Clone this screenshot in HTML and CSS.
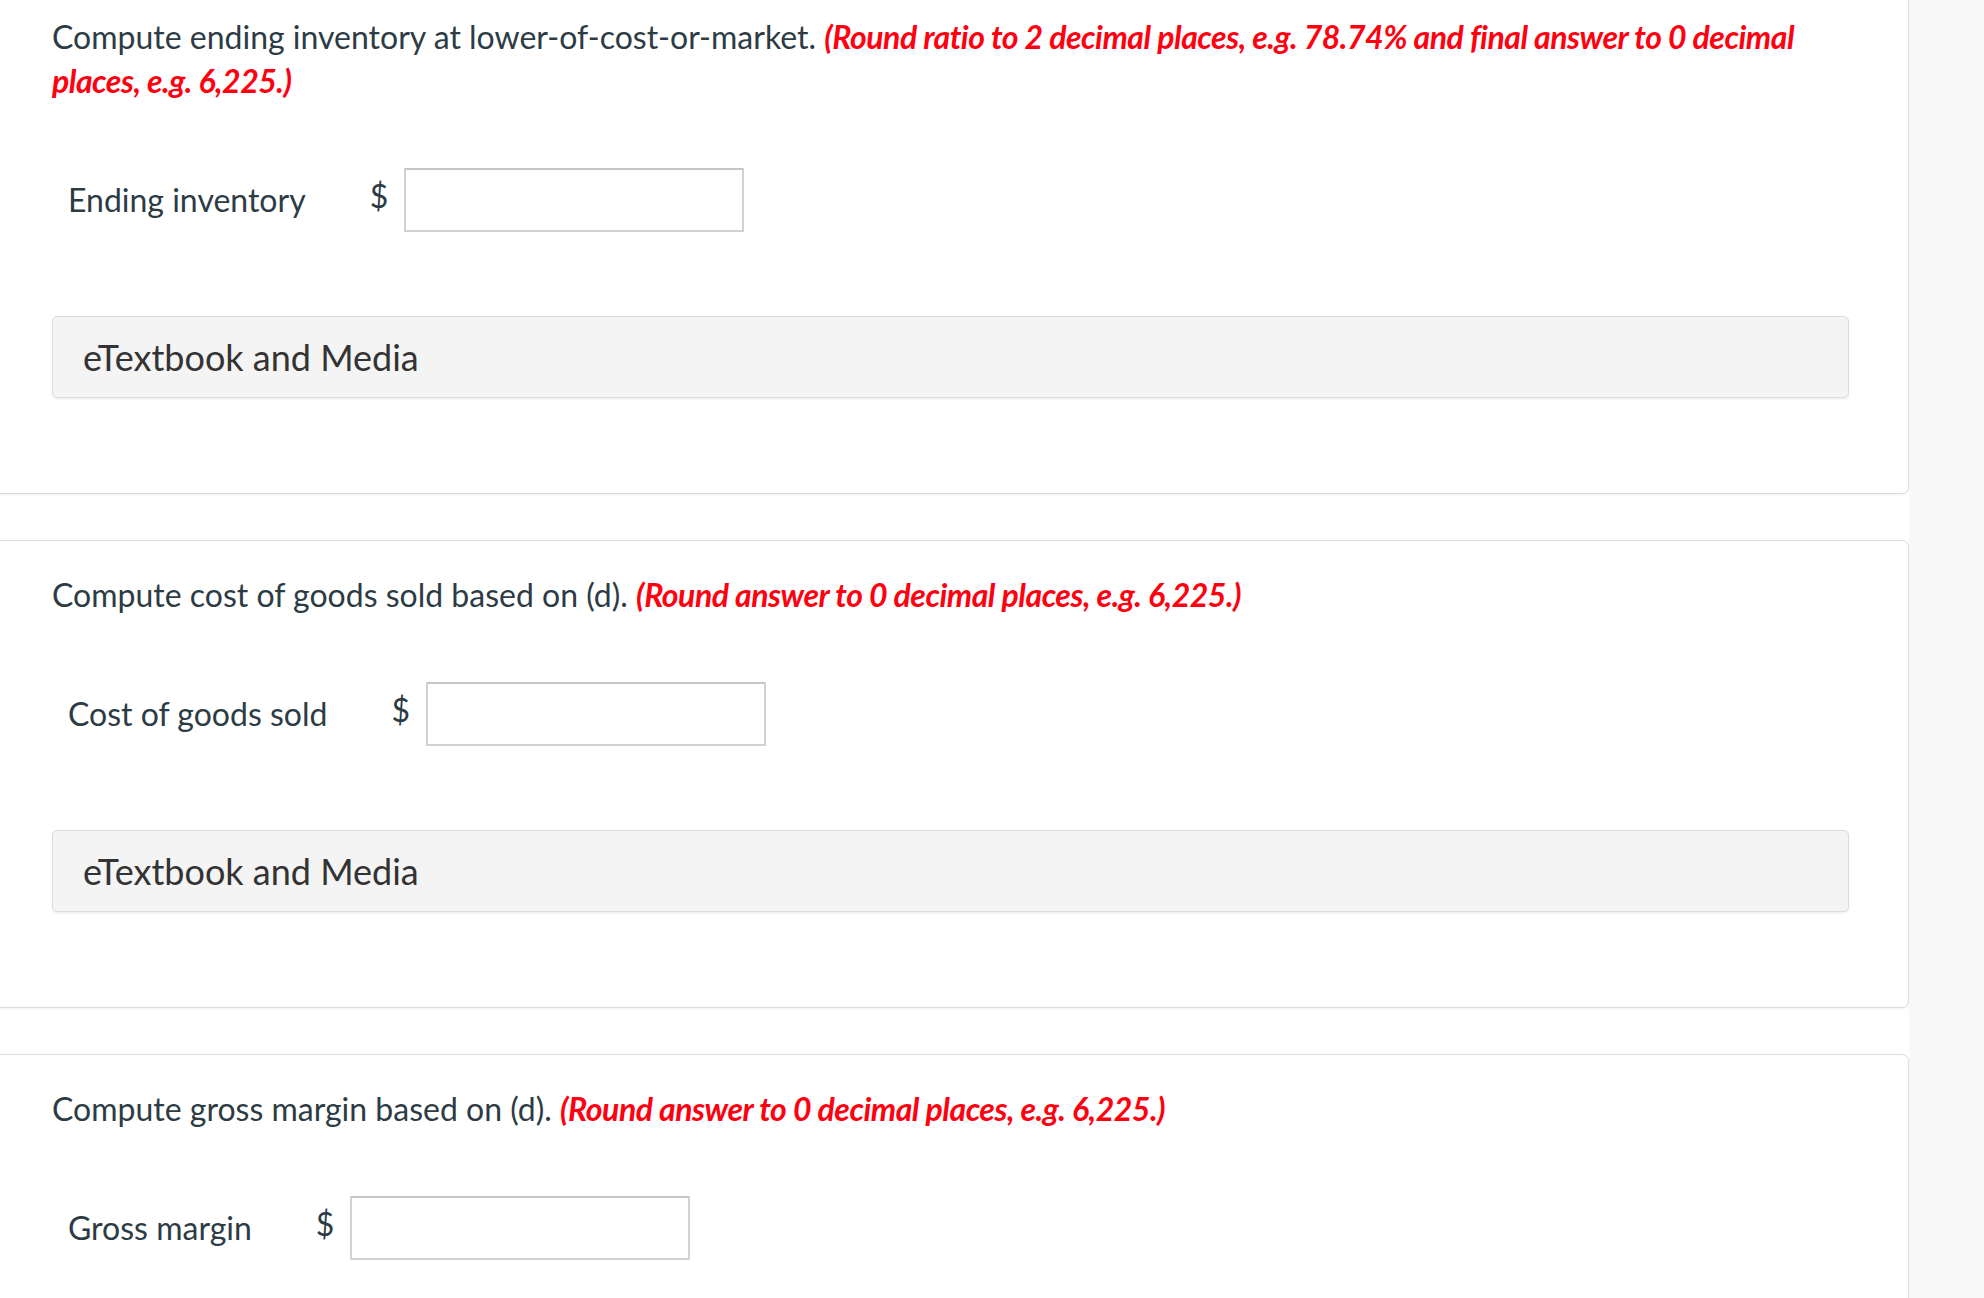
FILE: index.html
```html
<!DOCTYPE html>
<html lang="en">
<head>
<meta charset="utf-8">
<title>Inventory questions</title>
<link rel="stylesheet" href="styles.css">
</head>
<body>
<div class="page">
  <main class="main">
    <section class="card card-first">
      <p class="prompt">Compute ending inventory at lower-of-cost-or-market. <em class="hint">(Round ratio to 2 decimal places, e.g. 78.74% and final answer to 0 decimal places, e.g. 6,225.)</em></p>
      <div class="answer-row">
        <span class="label">Ending inventory</span>
        <span class="currency">$</span>
        <input class="field" type="text" aria-label="Ending inventory">
      </div>
      <div class="media">eTextbook and Media</div>
    </section>

    <section class="card">
      <p class="prompt">Compute cost of goods sold based on (d). <em class="hint">(Round answer to 0 decimal places, e.g. 6,225.)</em></p>
      <div class="answer-row">
        <span class="label">Cost of goods sold</span>
        <span class="currency">$</span>
        <input class="field" type="text" aria-label="Cost of goods sold">
      </div>
      <div class="media">eTextbook and Media</div>
    </section>

    <section class="card">
      <p class="prompt">Compute gross margin based on (d). <em class="hint">(Round answer to 0 decimal places, e.g. 6,225.)</em></p>
      <div class="answer-row">
        <span class="label">Gross margin</span>
        <span class="currency">$</span>
        <input class="field" type="text" aria-label="Gross margin">
      </div>
      <div class="media">eTextbook and Media</div>
    </section>
  </main>
  <aside class="side"></aside>
</div>
</body>
</html>
```

FILE: styles.css
```css
html, body {
  margin: 0;
  padding: 0;
  background: #ffffff;
  font-family: Lato, "Open Sans", "Liberation Sans", sans-serif;
  color: #2d3b45;
}

.page {
  display: flex;
  height: 1298px;
  overflow: hidden;
}

.main {
  width: 1909px;
  flex: 0 0 1909px;
  display: flex;
  flex-direction: column;
  gap: 46px;
  background: #ffffff;
}

.side {
  flex: 1 1 auto;
  background: #f8f8f8;
}

.card {
  margin-left: -10px;
  border: 1px solid #dcdcdc;
  border-radius: 7px;
  box-shadow: 0 1px 3px rgba(0, 0, 0, 0.06);
  padding: 32px 59px 95px 61px;
  background: #ffffff;
  flex: 0 0 auto;
}

.card-first {
  margin-top: -18px;
}

.prompt {
  margin: 0;
  font-size: 32px;
  line-height: 44px;
  color: #2d3b45;
}

.hint {
  font-style: italic;
  font-weight: 700;
  color: #ff0010;
  letter-spacing: -0.48px;
}

.answer-row {
  display: flex;
  align-items: center;
  margin-top: 65px;
  padding-left: 16px;
}

.label {
  font-size: 32px;
  line-height: 40px;
  color: #2d3b45;
  margin-right: 64px;
}

.currency {
  font-size: 32px;
  line-height: 40px;
  color: #2d3b45;
  margin-right: 16px;
  margin-bottom: 8px;
}

.field {
  box-sizing: border-box;
  width: 340px;
  height: 64px;
  margin: 0;
  border: 2px solid #d2d2d2;
  border-top-color: #c6c6c6;
  border-radius: 1px;
  background: #ffffff;
  font: inherit;
  font-size: 28px;
  padding: 0 12px;
}

.media {
  box-sizing: border-box;
  display: flex;
  align-items: center;
  height: 82px;
  margin-top: 84px;
  padding: 0 30px;
  background: #f4f4f4;
  border: 1px solid #dcdcdc;
  border-radius: 5px;
  box-shadow: 0 2px 2px rgba(0, 0, 0, 0.05);
  font-size: 36px;
  color: #333333;
}
```
